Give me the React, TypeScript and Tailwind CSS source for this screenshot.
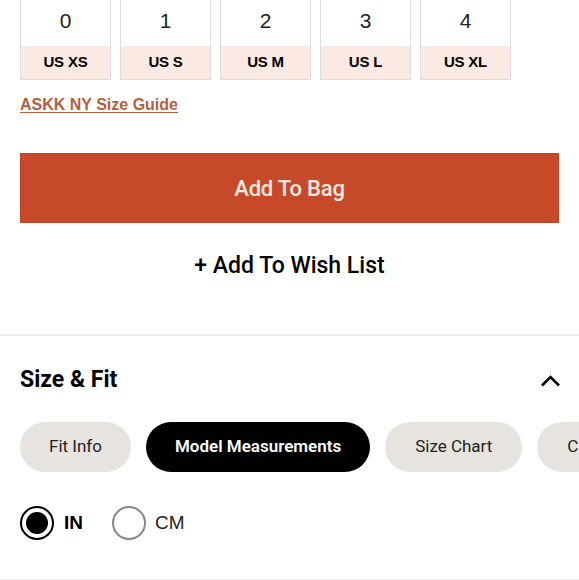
const sizes = [
  { num: '0', label: 'US XS' },
  { num: '1', label: 'US S' },
  { num: '2', label: 'US M' },
  { num: '3', label: 'US L' },
  { num: '4', label: 'US XL' },
];

const tabs = ['Fit Info', 'Model Measurements', 'Size Chart', 'Care'];

function App() {
  return (
    <div className="w-[579px] h-[580px] overflow-hidden bg-white font-['Roboto',sans-serif] text-black">
      <div className="px-5">
        <div className="flex gap-[9px] -mt-px">
          {sizes.map((s) => (
            <div key={s.num} className="w-[91px] border border-[#dcdcdc] flex flex-col">
              <div className="h-[46px] pb-1 flex items-center justify-center font-['Liberation_Sans',sans-serif] text-[21px] text-[#222]">
                {s.num}
              </div>
              <div className="h-[33px] bg-[#fbeae3] flex items-center justify-center font-['Liberation_Sans',sans-serif] font-bold text-[15px] tracking-[-0.2px]">
                {s.label}
              </div>
            </div>
          ))}
        </div>
        <a className="block mt-[14px] text-[16px] font-bold text-[#b4603e] underline underline-offset-2 font-['Liberation_Sans',sans-serif] leading-[22px]">
          ASKK NY Size Guide
        </a>
        <button className="mt-[37px] w-full h-[70px] bg-[#c64a2a] border border-[#b9452a] text-[#fbebe0] text-[22px] font-medium tracking-[-0.2px]">
          Add To Bag
        </button>
        <div className="h-[86px] flex items-center justify-center text-[23px] font-medium">
          + Add To Wish List
        </div>
      </div>
      <div className="mt-[25px] h-[2px] bg-[#ededed]" />
      <div className="px-5">
        <div className="h-[88px] flex items-center justify-between">
          <h2 className="text-[23px] font-bold">Size &amp; Fit</h2>
          <svg width="21" height="13" viewBox="0 0 21 13" fill="none" className="mr-[-2px]">
            <path d="M2 11.5L10.5 3L19 11.5" stroke="black" strokeWidth="2.6" />
          </svg>
        </div>
        <div className="-mt-[2px] flex gap-[15px] whitespace-nowrap -mr-5 overflow-hidden">
          {tabs.map((t, i) => (
            <div
              key={t}
              className={
                i === 1
                  ? 'h-[50px] px-[29px] rounded-full bg-black text-white font-semibold text-[17px] flex items-center shrink-0'
                  : i === 0
                    ? 'h-[50px] px-[29px] rounded-full bg-[#e7e3de] text-[#222] text-[17px] flex items-center shrink-0'
                    : 'h-[50px] px-[30px] rounded-full bg-[#e7e3de] text-[#222] text-[17px] flex items-center shrink-0'
              }
            >
              {t}
            </div>
          ))}
        </div>
        <div className="mt-[34px] flex items-center h-[34px]">
          <div className="w-[34px] h-[34px] rounded-full border-2 border-black flex items-center justify-center">
            <div className="w-[22px] h-[22px] rounded-full bg-black" />
          </div>
          <span className="ml-[10px] text-[19px] font-bold font-['Liberation_Sans',sans-serif]">IN</span>
          <div className="ml-[29px] w-[34px] h-[34px] rounded-full border-2 border-[#888]" />
          <span className="ml-[9px] text-[19px] font-['Liberation_Sans',sans-serif] text-[#222]">CM</span>
        </div>
      </div>
      <div className="mt-[39px] h-px bg-[#ededed]" />
    </div>
  );
}

export default App;
